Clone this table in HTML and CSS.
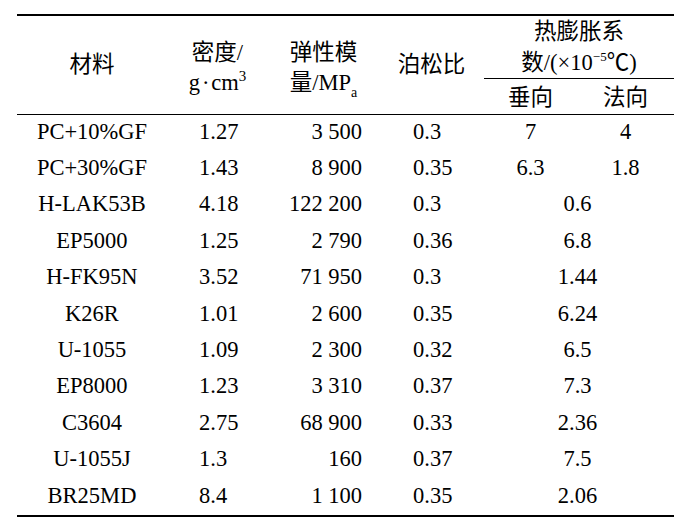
FILE: index.html
```html
<!DOCTYPE html>
<html lang="zh">
<head>
<meta charset="utf-8">
<title>材料参数表</title>
<link rel="stylesheet" href="styles.css">
</head>
<body>
<table class="props">
  <colgroup>
    <col class="c-mat"><col class="c-den"><col class="c-mod"><col class="c-poi"><col class="c-v"><col class="c-n">
  </colgroup>
  <thead>
    <tr class="hr-a">
      <th rowspan="2" class="h-single">材料</th>
      <th rowspan="2" class="h-double">密度/<br>g&#8202;·&#8202;cm<sup class="sup">3</sup></th>
      <th rowspan="2" class="h-double">弹性模<br>量/MP<sub class="sub">a</sub></th>
      <th rowspan="2" class="h-single">泊松比</th>
      <th colspan="2" class="h-group">热膨胀系<br>数/(×10<sup class="sup-s">−5</sup>℃)</th>
    </tr>
    <tr class="hr-b">
      <th class="h-sub">垂向</th>
      <th class="h-sub">法向</th>
    </tr>
  </thead>
  <tbody>
    <tr><td class="mat">PC+10%GF</td><td class="den">1.27</td><td class="mod">3 500</td><td class="poi">0.3</td><td class="exp">7</td><td class="exp">4</td></tr>
    <tr><td class="mat">PC+30%GF</td><td class="den">1.43</td><td class="mod">8 900</td><td class="poi">0.35</td><td class="exp">6.3</td><td class="exp">1.8</td></tr>
    <tr><td class="mat">H-LAK53B</td><td class="den">4.18</td><td class="mod">122 200</td><td class="poi">0.3</td><td class="exp-m" colspan="2">0.6</td></tr>
    <tr><td class="mat">EP5000</td><td class="den">1.25</td><td class="mod">2 790</td><td class="poi">0.36</td><td class="exp-m" colspan="2">6.8</td></tr>
    <tr><td class="mat">H-FK95N</td><td class="den">3.52</td><td class="mod">71 950</td><td class="poi">0.3</td><td class="exp-m" colspan="2">1.44</td></tr>
    <tr><td class="mat">K26R</td><td class="den">1.01</td><td class="mod">2 600</td><td class="poi">0.35</td><td class="exp-m" colspan="2">6.24</td></tr>
    <tr><td class="mat">U-1055</td><td class="den">1.09</td><td class="mod">2 300</td><td class="poi">0.32</td><td class="exp-m" colspan="2">6.5</td></tr>
    <tr><td class="mat">EP8000</td><td class="den">1.23</td><td class="mod">3 310</td><td class="poi">0.37</td><td class="exp-m" colspan="2">7.3</td></tr>
    <tr><td class="mat">C3604</td><td class="den">2.75</td><td class="mod">68 900</td><td class="poi">0.33</td><td class="exp-m" colspan="2">2.36</td></tr>
    <tr><td class="mat">U-1055J</td><td class="den">1.3</td><td class="mod">160</td><td class="poi">0.37</td><td class="exp-m" colspan="2">7.5</td></tr>
    <tr><td class="mat">BR25MD</td><td class="den">8.4</td><td class="mod">1 100</td><td class="poi">0.35</td><td class="exp-m" colspan="2">2.06</td></tr>
  </tbody>
</table>
</body>
</html>
```

FILE: styles.css
```css
html, body {
  margin: 0;
  padding: 0;
  background: #ffffff;
}

body {
  font-family: "Liberation Serif", "Noto Sans CJK SC", serif;
  font-size: 22.5px;
  color: #000000;
}

.props {
  margin: 14px 0 0 17px;
  width: 657px;
  table-layout: fixed;
  border-collapse: separate;
  border-spacing: 0;
  border-top: 2px solid #000;
  border-bottom: 2px solid #000;
}

.c-mat { width: 150px; }
.c-den { width: 101px; }
.c-mod { width: 111px; }
.c-poi { width: 105px; }
.c-v { width: 93px; }
.c-n { width: 97px; }

th, td {
  padding: 0;
  font-weight: normal;
  white-space: nowrap;
}

th {
  text-align: center;
  vertical-align: middle;
  line-height: 30.5px;
}

.hr-a { height: 61px; }
.hr-b { height: 36px; }

.h-single {
  border-bottom: 1px solid #000;
}

.h-double {
  border-bottom: 1px solid #000;
  padding-top: 6px;
}

.h-group {
  border-bottom: 1px solid #000;
  padding-top: 1px;
}

.h-sub {
  border-bottom: 1px solid #000;
  padding-top: 3px;
}

.sup {
  font-size: 15px;
  vertical-align: 9px;
  line-height: 0;
}

.sup-s {
  font-size: 13px;
  vertical-align: 9px;
  line-height: 0;
}

.sub {
  font-size: 14px;
  vertical-align: -7px;
  line-height: 0;
}

tbody tr {
  height: 36.4px;
}

td {
  line-height: 24px;
  vertical-align: middle;
  padding-bottom: 3px;
}

.mat {
  text-align: center;
}

.den {
  text-align: left;
  padding-left: 32px;
}

.mod {
  text-align: right;
  padding-right: 17px;
}

.poi {
  text-align: left;
  padding-left: 34px;
}

.exp {
  text-align: center;
}

.exp-m {
  text-align: center;
  padding-right: 3px;
}
```
